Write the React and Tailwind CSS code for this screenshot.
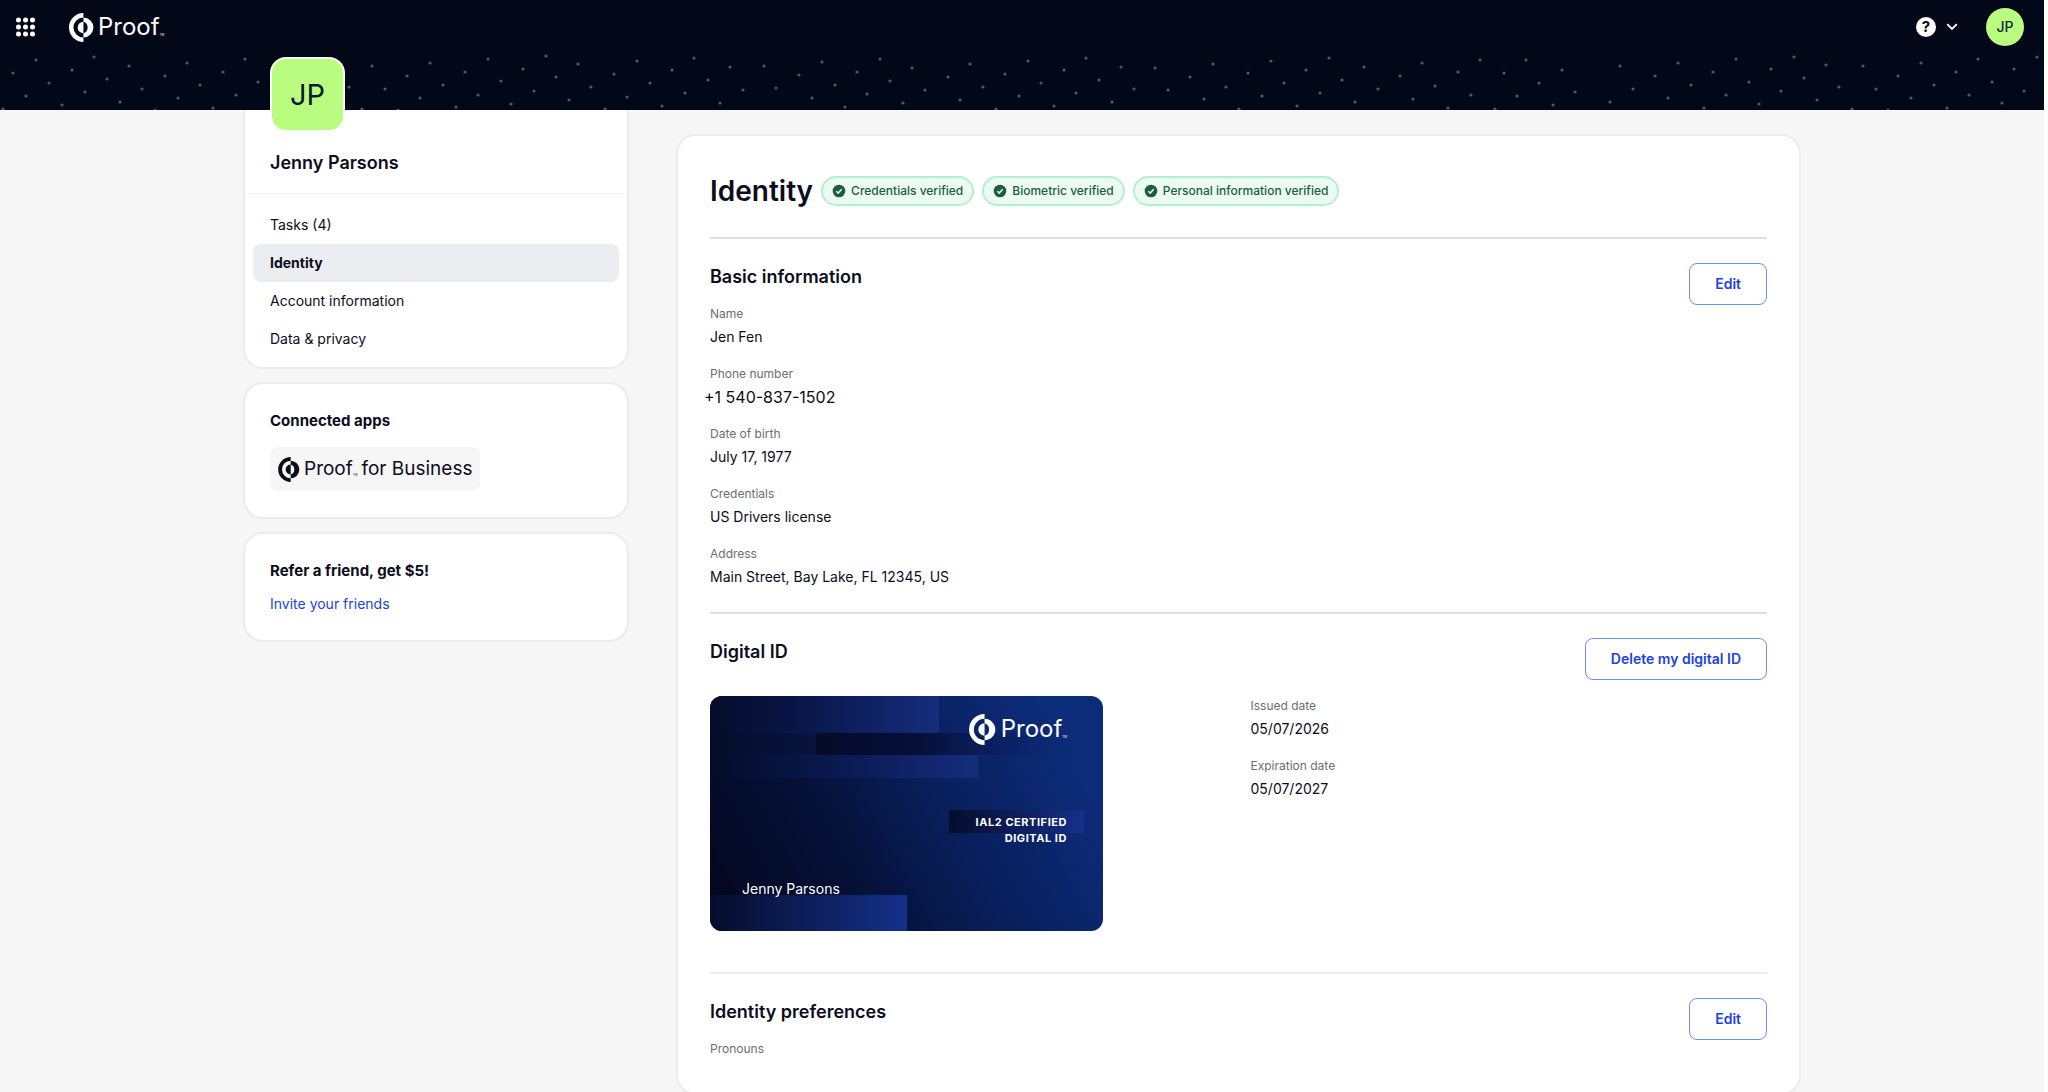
import React from "react";

const DOTS = [
  [13, 73], [36, 60], [26, 96], [49, 83], [72, 70], [94, 57], [62, 105], [85, 92], [107, 79], [129, 66],
  [120, 102], [142, 89], [165, 76], [187, 63], [178, 98], [200, 85], [223, 72], [245, 59], [213, 108],
  [236, 95], [258, 82], [3, 109], [155, 110], [372, 66], [349, 87], [407, 76], [385, 89], [430, 63],
  [420, 98], [443, 85], [465, 72], [488, 59], [456, 107], [478, 95], [501, 81], [523, 69], [546, 56],
  [511, 104], [534, 91], [556, 77], [578, 64], [362, 109], [398, 110], [569, 100], [591, 87], [614, 74],
  [637, 61], [627, 97], [650, 83], [672, 70], [662, 106], [605, 109],
  [685, 93], [694, 58], [708, 80], [720, 103], [730, 67], [743, 90], [764, 66], [776, 88], [799, 75],
  [812, 98], [822, 62], [835, 85], [845, 107], [857, 72], [867, 94], [880, 59], [890, 81], [903, 103],
  [912, 68], [925, 90], [948, 77], [960, 100], [970, 64], [983, 87], [996, 109], [1005, 74], [1019, 96],
  [1028, 61], [1041, 83], [1054, 106], [1064, 70], [1076, 93], [1086, 58], [1099, 80], [1112, 102],
  [1121, 67], [1134, 89], [1155, 68], [1168, 90], [1190, 77], [1204, 99], [1213, 64], [1226, 87],
  [1239, 109], [1248, 73], [1262, 96], [1271, 61], [1284, 83], [1297, 106], [1306, 70], [1320, 93],
  [1329, 58], [1342, 80], [1355, 102], [1364, 67], [1378, 89], [1400, 76], [1413, 99], [1422, 63],
  [1435, 86], [1448, 108], [1458, 72], [1471, 95], [1480, 60], [1495, 109], [1504, 73], [1517, 96],
  [1526, 60], [1539, 83], [1553, 105], [1562, 70], [1575, 92],
  [1610, 102], [1620, 66], [1633, 89], [1655, 76], [1668, 98], [1678, 63], [1691, 85], [1704, 108],
  [1713, 72], [1726, 95], [1736, 59], [1749, 82], [1759, 104], [1771, 69], [1781, 91], [1794, 57],
  [1804, 78], [1817, 100], [1826, 65], [1839, 87], [1852, 109], [1863, 66], [1876, 89], [1888, 110],
  [1898, 76], [1911, 98], [1921, 63], [1934, 85], [1947, 108], [1956, 72], [1969, 95], [1978, 59],
  [1992, 82], [2002, 103], [2014, 69], [2024, 91], [2037, 57],
];

function ProofMark({ className }) {
  return (
    <svg viewBox="0 0 26 30" className={className} fill="currentColor" aria-hidden="true">
      <path d="M15 0A15 15 0 0 0 15 30V25.400A10.400 10.400 0 0 1 15 4.600Z" />
      <path d="M15 4.600A10.400 10.400 0 0 1 15 25.400V21A6.300 6.300 0 0 0 15 9Z" />
      <path d="M15 9A6 6 0 0 0 15 21Z" />
    </svg>
  );
}

function CheckBadge({ children }) {
  return (
    <span className="flex h-[30px] items-center gap-[5px] rounded-full border-2 border-[#b4f0cd] bg-[#ecfbf2] px-[9px] text-xs font-medium text-[#1d5b42]">
      <svg viewBox="0 0 14 14" className="size-[14px]" aria-hidden="true">
        <circle cx="7" cy="7" r="6.300" fill="#1d5b42" />
        <path d="M4.300 7.300l1.900 1.800 3.500-3.800" fill="none" stroke="#ecfbf2" strokeWidth="1.500" />
      </svg>
      {children}
    </span>
  );
}

function Field({ label, value, phone }) {
  return (
    <div className="flex flex-col">
      <dt className="text-xs leading-5 text-[#6b6d76]">{label}</dt>
      <dd className={phone ? "-ml-[6px] h-6 text-base leading-[26px]" : "h-6 text-sm leading-[26px]"}>{value}</dd>
    </div>
  );
}

function OutlineButton({ children }) {
  return (
    <button className="h-[42px] rounded-lg border border-[#6f8df0] px-[25px] text-sm font-semibold text-[#1c43e0]">
      {children}
    </button>
  );
}

function Card({ className, children }) {
  return <section className={"rounded-[20px] border-2 border-[#ececed] bg-white " + className}>{children}</section>;
}

function DigitalCard() {
  return (
    <div className="relative h-[235px] w-[393px] overflow-hidden rounded-xl text-white">
      <svg viewBox="0 0 393 235" className="absolute inset-0 size-full" aria-hidden="true">
        <defs>
          <linearGradient id="base" gradientUnits="userSpaceOnUse" x1="0" y1="190" x2="330" y2="10">
            <stop offset="0" stopColor="#03071f" />
            <stop offset="0.350" stopColor="#061139" />
            <stop offset="0.650" stopColor="#091f5c" />
            <stop offset="1" stopColor="#0c2b78" />
          </linearGradient>
          <linearGradient id="glow">
            <stop offset="0" stopColor="#050c2a" />
            <stop offset="0.400" stopColor="#09164a" />
            <stop offset="1" stopColor="#142d7c" />
          </linearGradient>
          <linearGradient id="bright">
            <stop offset="0" stopColor="#050c2c" />
            <stop offset="1" stopColor="#15308a" />
          </linearGradient>
          <linearGradient id="faint">
            <stop offset="0" stopColor="#050c2a" />
            <stop offset="1" stopColor="#08143f" />
          </linearGradient>
          <linearGradient id="shade">
            <stop offset="0" stopColor="#050a28" />
            <stop offset="0.400" stopColor="#070f3a" />
            <stop offset="1" stopColor="#0b2670" stopOpacity="0" />
          </linearGradient>
        </defs>
        <rect width="393" height="235" fill="url(#base)" />
        <rect width="229" height="37" fill="url(#glow)" />
        <rect y="37" width="106" height="22" fill="url(#faint)" />
        <rect x="106" y="37" width="260" height="22" fill="url(#shade)" />
        <rect y="59" width="268" height="23" fill="url(#glow)" />
        <rect x="239" y="114" width="135" height="23" fill="url(#bright)" />
        <rect y="199" width="197" height="36" fill="url(#bright)" />
      </svg>
      <div className="relative flex h-full flex-col px-8 pt-[17px]">
        <div className="flex items-center self-end pr-1">
          <ProofMark className="mr-[5px] h-[31px] w-[27px]" />
          <span className="text-2xl leading-8">Proof</span>
          <span className="mt-4 text-[3px] leading-none">TM</span>
        </div>
        <p className="mt-[69px] self-end pr-1 text-right text-[11px] leading-4 font-bold tracking-wider">
          IAL2 CERTIFIED
          <br />
          DIGITAL ID
        </p>
        <p className="mt-[33px] text-sm leading-5">Jenny Parsons</p>
      </div>
    </div>
  );
}

const NAV = ["Tasks (4)", "Identity", "Account information", "Data & privacy"];

export default function App() {
  return (
    <div className="min-h-screen bg-white pr-1 font-['Inter',sans-serif] text-[#0b0d1c]">
      <div className="min-h-screen bg-[#f6f6f6]">
        <div className="relative h-[110px] overflow-hidden bg-[#020817]">
          <svg className="absolute top-0 left-0 h-[110px] w-[2045px]" aria-hidden="true">
            {DOTS.map(([x, y]) => (
              <circle key={x + "-" + y} cx={x} cy={y} r="1.600" fill="#535766" />
            ))}
          </svg>
          <header className="relative flex h-[54px] items-center bg-[#020817] pr-5 pl-4 text-white">
            <button aria-label="Apps">
              <svg viewBox="0 0 19 20" className="h-5 w-[19px]" fill="currentColor">
                {[3, 10, 17].map((y) => [2.5, 9.5, 16.5].map((x) => <circle key={x + "-" + y} cx={x} cy={y} r="2.500" />))}
              </svg>
            </button>
            <a href="#" className="ml-[34px] flex items-center">
              <ProofMark className="mr-1 h-[29px] w-[25px]" />
              <span className="text-2xl leading-8">Proof</span>
              <span className="mt-4 text-[3px] leading-none">TM</span>
            </a>
            <button aria-label="Help" className="ml-auto flex items-center gap-[10px]">
              <span className="flex size-5 items-center justify-center rounded-full bg-white text-[15px] font-bold text-[#020817]">?</span>
              <svg viewBox="0 0 12 8" className="h-2 w-3" fill="none" stroke="currentColor" strokeWidth="1.800">
                <path d="M1.200 1.200L6 6l4.800-4.800" />
              </svg>
            </button>
            <button className="ml-7 size-[38px] rounded-full bg-[#b9fc80] text-sm font-medium text-[#12233a]">JP</button>
          </header>
        </div>

        <div className="mx-auto flex max-w-[1558px] items-start gap-[47px]">
          <aside className="flex w-[386px] shrink-0 flex-col gap-[13px]">
            <section className="rounded-b-[20px] border-2 border-t-0 border-[#ececed] bg-white">
              <div className="border-b border-[#f0f0f1] px-[25px] pb-[18px]">
                <div className="relative -mt-[53px] flex size-[75px] items-center justify-center rounded-2xl border-2 border-white bg-[#b9fc80] text-[29px] text-[#0b1a2e]">
                  JP
                </div>
                <h2 className="mt-[19px] text-lg leading-6 font-semibold">Jenny Parsons</h2>
              </div>
              <nav className="flex flex-col px-2 pt-3 pb-[9px]">
                {NAV.map((item) => (
                  <a
                    key={item}
                    href="#"
                    className={
                      item === "Identity"
                        ? "rounded-lg bg-[#ecedf1] px-[17px] text-sm leading-[38px] font-bold"
                        : "px-[17px] text-sm leading-[38px]"
                    }
                  >
                    {item}
                  </a>
                ))}
              </nav>
            </section>
            <Card className="px-[25px] pt-[25px] pb-[26px]">
              <h3 className="text-[15px] leading-6 font-bold">Connected apps</h3>
              <a href="#" className="mt-[14px] inline-flex h-[44px] items-center rounded-lg bg-[#f6f6f6] px-2">
                <ProofMark className="mr-1 h-[25px] w-[22px]" />
                <span className="text-[19px]">Proof</span>
                <span className="mt-3 mr-1 text-[3px] leading-none">TM</span>
                <span className="text-[19px]">for Business</span>
              </a>
            </Card>
            <Card className="px-[25px] pt-[25px] pb-6">
              <h3 className="text-[15px] leading-6 font-bold">Refer a friend, get $5!</h3>
              <a href="#" className="mt-[9px] block text-sm leading-6 text-[#1c43e0]">Invite your friends</a>
            </Card>
          </aside>

          <main className="mt-6 min-w-0 flex-1">
            <Card className="px-8 pt-[33px]">
              <div className="flex items-center gap-2 border-b-2 border-[#dedee2] pb-6">
                <h1 className="text-[28px] leading-[44px] font-semibold">Identity</h1>
                <CheckBadge>Credentials verified</CheckBadge>
                <CheckBadge>Biometric verified</CheckBadge>
                <CheckBadge>Personal information verified</CheckBadge>
              </div>
              <div className="flex items-start justify-between border-b-2 border-[#dedee2] pt-6 pb-6">
                <div>
                  <h2 className="text-lg leading-7 font-semibold">Basic information</h2>
                  <dl className="mt-[13px] flex flex-col gap-4">
                    <Field label="Name" value="Jen Fen" />
                    <Field label="Phone number" value="+1 540-837-1502" phone />
                    <Field label="Date of birth" value="July 17, 1977" />
                    <Field label="Credentials" value="US Drivers license" />
                    <Field label="Address" value="Main Street, Bay Lake, FL 12345, US" />
                  </dl>
                </div>
                <OutlineButton>Edit</OutlineButton>
              </div>
              <div className="border-b-2 border-[#ececed] pt-6 pb-[41px]">
                <div className="flex items-start justify-between">
                  <h2 className="text-lg leading-7 font-semibold">Digital ID</h2>
                  <OutlineButton>Delete my digital ID</OutlineButton>
                </div>
                <div className="mt-4 grid grid-cols-2 gap-6">
                  <DigitalCard />
                  <dl className="flex flex-col gap-4">
                    <Field label="Issued date" value="05/07/2026" />
                    <Field label="Expiration date" value="05/07/2027" />
                  </dl>
                </div>
              </div>
              <div className="flex items-start justify-between pt-6 pb-[34px]">
                <div>
                  <h2 className="text-lg leading-7 font-semibold">Identity preferences</h2>
                  <p className="mt-[13px] text-xs leading-5 text-[#6b6d76]">Pronouns</p>
                </div>
                <OutlineButton>Edit</OutlineButton>
              </div>
            </Card>
          </main>
        </div>
      </div>
    </div>
  );
}
